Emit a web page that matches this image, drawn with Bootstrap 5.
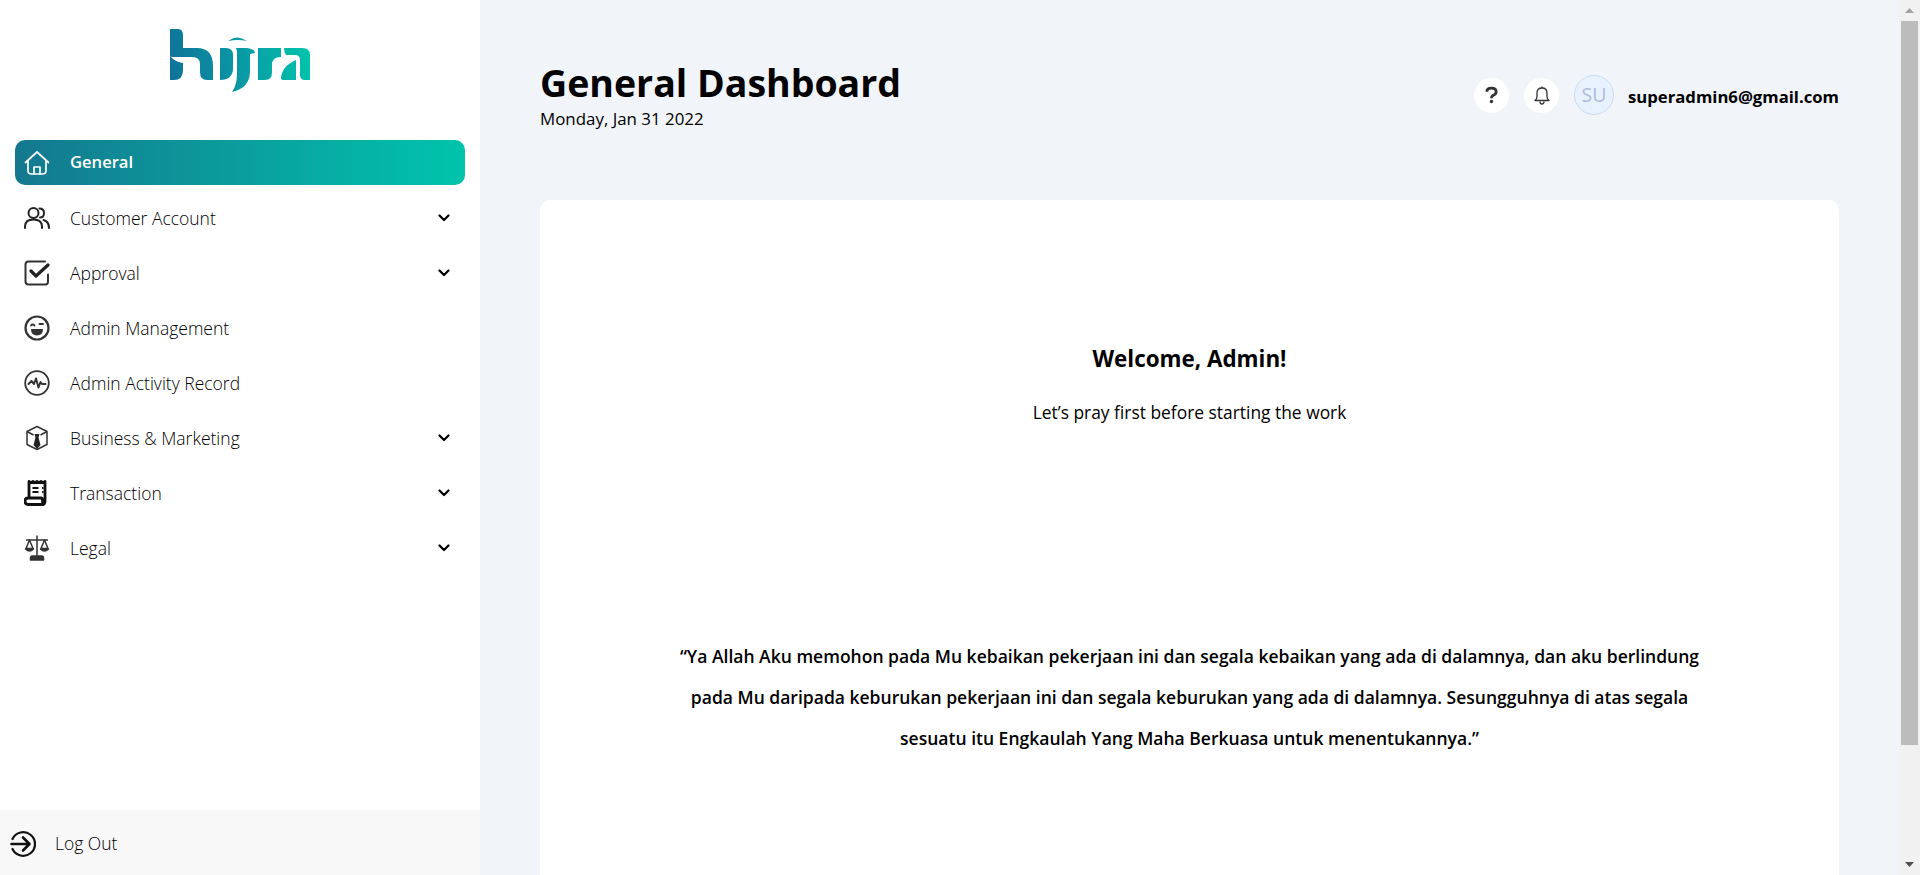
<!DOCTYPE html>
<html lang="en">
<head>
<meta charset="utf-8">
<title>General Dashboard</title>
<link href="https://cdn.jsdelivr.net/npm/bootstrap@5.3.0/dist/css/bootstrap.min.css" rel="stylesheet">
<style>
html,body{height:875px;overflow:hidden}
body{font-family:"Open Sans",sans-serif;background:#f1f4f9;color:#000}
.shell{height:875px}
.side{width:480px;flex:none;background:#fff}
.logo-wrap{height:140px;padding-top:29px}
.menu{padding:0 15px;gap:10px}
.menu-item{height:45px;padding:1px 10px 0 9px;color:#000;font-weight:300;font-size:17.5px;border-radius:10px;text-decoration:none}
.menu-item.on{background:linear-gradient(90deg,#14788f 0%,#00c4ac 100%);color:#fff;font-weight:600;font-size:16.6px;padding-top:0}
.menu-ico{width:26px;height:26px;flex:none;margin-right:20px}
.menu-ico svg{display:block;width:26px;height:26px}
.chev{width:12px;height:8px;flex:none;margin-right:5px}
.logout{height:65px;background:#f8f8f8;padding:2px 0 0 10px;font-weight:300;font-size:17.5px;color:#000}
.logout svg{width:26px;height:26px;margin-right:19px}
.page{min-width:0;padding:0 60px;overflow:hidden}
.head{height:200px;padding-top:60px;flex:none}
.ttl{font-size:37.5px;font-weight:700;line-height:45px;margin:0;color:#000}
.dt{font-size:16.9px;line-height:24px;margin:2px 0 0}
.tools{height:40px;margin-top:15px;gap:15px}
.round{width:35px;height:35px;background:#fff}
.avatar{width:40px;height:40px;background:#e8f2fe;border:1px solid #c9dcf7;color:#b0bbdf;font-size:19.5px;margin-right:-1px}
.mail{font-size:16.7px;font-weight:700;margin-top:3px}
.panel{border:0;border-radius:10px;background:#fff;flex:none;height:820px}
.wel{margin-top:134px;font-size:22.4px;font-weight:700;line-height:50px;margin-bottom:0}
.pray{font-size:17.4px;line-height:28px;margin-top:14px;margin-bottom:0}
.doa{margin:210px auto 0;width:1040px;font-size:17.53px;font-weight:600;line-height:41px}
.sbar{width:21px;flex:none;background:#f1f1f1;padding:0 2px}
.sbtn{height:21px}
.thumb{height:724px;background:#bcbcbc}
</style>
</head>
<body>
<div class="shell d-flex">
  <aside class="side d-flex flex-column">
    <div class="logo-wrap d-flex justify-content-center">
      <svg width="140" height="63" viewBox="170 29 140 63" aria-label="hijra logo">
        <defs><linearGradient id="lg" gradientUnits="userSpaceOnUse" x1="170" y1="70" x2="310" y2="50"><stop offset="0" stop-color="#0f7398"/><stop offset=".45" stop-color="#0a95a3"/><stop offset="1" stop-color="#00c4ac"/></linearGradient></defs>
        <g fill="url(#lg)">
          <path d="M170 29h8q5 0 5 6v13h14q16 0 16 18v14h-6q-7 0-7-8v-8q0-7-8-7h-16q-12 0-16-8z"/>
          <path d="M170 56q5 6 13 7v7q0 10-9 10h-4z"/>
          <path d="M220 48h6q7 0 7 7v13q0 12-13 12z"/>
          <path d="M228 41q9-7 19 0q-9-2-19 0z"/>
          <path d="M236 48h11q8 1 8 5l-5 1v17q0 17-18 21 5-7 5-18v-20q0-4-1-6z"/>
          <path d="M258 48h23v9q-9 0-9 8v7q0 8-7 8h-7z"/>
          <path d="M284 48h18q8 0 8 7v25h-5q-5 0-5-5V60q0-5-5-5h-9q-2-3-2-7z"/>
          <path d="M296 60v20h-13q-2 0-2-2 1-12 15-18z"/>
        </g>
      </svg>
    </div>
    <nav class="menu d-flex flex-column">
      <a class="menu-item on d-flex align-items-center" href="#">
        <span class="menu-ico"><svg viewBox="0 0 26 26" fill="none" stroke="#fff" stroke-width="1.7" stroke-linejoin="round" stroke-linecap="round"><path d="M1.500 12.500 13 2l11.500 10.500M4 10.500v10q0 3.500 3.500 3.500h11q3.500 0 3.500-3.500v-10"/><path d="M10 24v-7h6v7"/></svg></span>General
      </a>
      <a class="menu-item d-flex align-items-center" href="#">
        <span class="menu-ico"><svg viewBox="0 0 26 26" fill="none" stroke="#222" stroke-width="2" stroke-linecap="round"><circle cx="9.500" cy="8" r="5"/><path d="M1 23v-1.500q0-7 8.500-7t8.500 7V23"/><path d="M15.500 3.500q4.500 0 4.500 4.500t-4 4.500"/><path d="M19.500 15q5.500 1.500 5.500 8"/></svg></span>Customer Account
        <svg class="chev ms-auto" viewBox="0 0 12 8" fill="none" stroke="#000" stroke-width="2.200" stroke-linecap="round" stroke-linejoin="round"><path d="M1.500 1.500 6 6l4.500-4.500"/></svg>
      </a>
      <a class="menu-item d-flex align-items-center" href="#">
        <span class="menu-ico"><svg viewBox="0 0 26 26" fill="none" stroke="#333" stroke-width="2" stroke-linecap="round" stroke-linejoin="round"><path d="M21 1.500H4.500q-3 0-3 3v17q0 3 3 3h17q2.500 0 2.500-3v-7"/><path d="m7 11 5 5L24 5" stroke="#222" stroke-width="3.200"/></svg></span>Approval
        <svg class="chev ms-auto" viewBox="0 0 12 8" fill="none" stroke="#000" stroke-width="2.200" stroke-linecap="round" stroke-linejoin="round"><path d="M1.500 1.500 6 6l4.500-4.500"/></svg>
      </a>
      <a class="menu-item d-flex align-items-center" href="#">
        <span class="menu-ico"><svg viewBox="0 0 26 26" fill="none" stroke="#333" stroke-width="2.200" stroke-linecap="round"><circle cx="13" cy="13" r="11.500"/><path d="M7 10.500q1.500-2 3.500 0M15.500 9h3.500" stroke-width="1.800"/><path d="M7 14h12q0 6.500-6 6.500T7 14z" fill="#333" stroke="none"/></svg></span>Admin Management
      </a>
      <a class="menu-item d-flex align-items-center" href="#">
        <span class="menu-ico"><svg viewBox="0 0 26 26" fill="none" stroke="#333" stroke-width="1.800" stroke-linecap="round" stroke-linejoin="round"><circle cx="13" cy="13" r="11.800"/><path d="M4.500 14 7.500 11l2.500 3L12 8.500l2.500 9 2-5.500 1.500 2h3.500" stroke-width="2"/></svg></span>Admin Activity Record
      </a>
      <a class="menu-item d-flex align-items-center" href="#">
        <span class="menu-ico"><svg viewBox="0 0 26 26" fill="none" stroke="#333" stroke-width="1.500" stroke-linejoin="round"><path d="M13 1.500 23 6.500v13L13 24.500 3 19.500v-13z"/><path d="M3 6.500 9.500 10M23 6.500 16.500 10"/><path d="M10.500 9h5l-1 3.500 2 7.500-3.500 4-3.500-4 2-7.500z" fill="#222" stroke="none"/></svg></span>Business &amp; Marketing
        <svg class="chev ms-auto" viewBox="0 0 12 8" fill="none" stroke="#000" stroke-width="2.200" stroke-linecap="round" stroke-linejoin="round"><path d="M1.500 1.500 6 6l4.500-4.500"/></svg>
      </a>
      <a class="menu-item d-flex align-items-center" href="#">
        <span class="menu-ico"><svg viewBox="0 0 26 26" fill="none" stroke="#111" stroke-width="2.800" stroke-linejoin="round"><path d="M5 18V1.500l2 1.200 2-1.200 2 1.200 2-1.200 2 1.200 2-1.200 2 1.200 2-1.200V21q0 3.500-3 3.500H4q-3 0-3-3.500 0-3 3-3h13q1.500 0 1.500 3 0 3.500 2 3.500"/><path d="M8.500 8h6M8.500 12h6M18 8h1.500M18 12h1.500" stroke-width="2"/></svg></span>Transaction
        <svg class="chev ms-auto" viewBox="0 0 12 8" fill="none" stroke="#000" stroke-width="2.200" stroke-linecap="round" stroke-linejoin="round"><path d="M1.500 1.500 6 6l4.500-4.500"/></svg>
      </a>
      <a class="menu-item d-flex align-items-center" href="#">
        <span class="menu-ico"><svg viewBox="0 0 26 26" fill="none" stroke="#333" stroke-width="1.500" stroke-linejoin="round"><path d="M13 .5V21M2 5h22"/><path d="M5.500 5 2 13.500h7zM20.500 5 17 13.500h7z"/><path d="M1.500 14q4 4 8 0zM16.500 14q4 4 8 0zM6.500 25v-2q0-2 2-2h9q2 0 2 2v2z" fill="#333"/></svg></span>Legal
        <svg class="chev ms-auto" viewBox="0 0 12 8" fill="none" stroke="#000" stroke-width="2.200" stroke-linecap="round" stroke-linejoin="round"><path d="M1.500 1.500 6 6l4.500-4.500"/></svg>
      </a>
    </nav>
    <div class="logout mt-auto d-flex align-items-center">
      <svg viewBox="0 0 26 26" fill="none" stroke="#111" stroke-width="2.200" stroke-linecap="round" stroke-linejoin="round"><path d="M2.500 8A11.800 11.800 0 1 1 2.500 18"/><path d="M1.500 13H19M13 6.500l6.500 6.500-6.500 6.500" stroke-width="2.600"/></svg>
      Log Out
    </div>
  </aside>
  <main class="page flex-grow-1 d-flex flex-column">
    <header class="head d-flex justify-content-between align-items-start">
      <div>
        <h1 class="ttl">General Dashboard</h1>
        <p class="dt">Monday, Jan 31 2022</p>
      </div>
      <div class="tools d-flex align-items-center">
        <span class="round rounded-circle d-flex align-items-center justify-content-center"><svg width="13" height="18" viewBox="0 0 14 18" fill="none" stroke="#333" stroke-width="3"><path d="M2 5.500Q2 1.500 7 1.500t5 4q0 2.500-2.500 3.500Q7 10 7 12.500"/><circle cx="7" cy="16" r="1.800" fill="#333" stroke="none"/></svg></span>
        <span class="round rounded-circle d-flex align-items-center justify-content-center"><svg width="16" height="19" viewBox="0 0 16 19" fill="none" stroke="#333" stroke-width="1.300" stroke-linejoin="round"><path d="M1 14.500q2-1.500 2-4V7q0-5 5-5t5 5v3.500q0 2.500 2 4z"/><path d="M8 .5V2M6 15.500q0 2.500 2 2.500t2-2.500"/></svg></span>
        <span class="avatar rounded-circle d-flex align-items-center justify-content-center">SU</span>
        <span class="mail">superadmin6@gmail.com</span>
      </div>
    </header>
    <section class="panel card text-center">
      <h2 class="wel">Welcome, Admin!</h2>
      <p class="pray">Let’s pray first before starting the work</p>
      <p class="doa">“Ya Allah Aku memohon pada Mu kebaikan pekerjaan ini dan segala kebaikan yang ada di dalamnya, dan aku berlindung pada Mu daripada keburukan pekerjaan ini dan segala keburukan yang ada di dalamnya. Sesungguhnya di atas segala sesuatu itu Engkaulah Yang Maha Berkuasa untuk menentukannya.”</p>
    </section>
  </main>
  <div class="sbar d-flex flex-column">
    <div class="sbtn d-flex align-items-center justify-content-center"><svg width="9" height="5" viewBox="0 0 9 5"><path d="M4.500 0 9 5H0z" fill="#a3a3a3"/></svg></div>
    <div class="thumb"></div>
    <div class="sbtn mt-auto d-flex align-items-center justify-content-center"><svg width="9" height="5" viewBox="0 0 9 5"><path d="M0 0h9L4.500 5z" fill="#505050"/></svg></div>
  </div>
</div>
<script src="https://cdn.jsdelivr.net/npm/bootstrap@5.3.0/dist/js/bootstrap.bundle.min.js"></script>
</body>
</html>
